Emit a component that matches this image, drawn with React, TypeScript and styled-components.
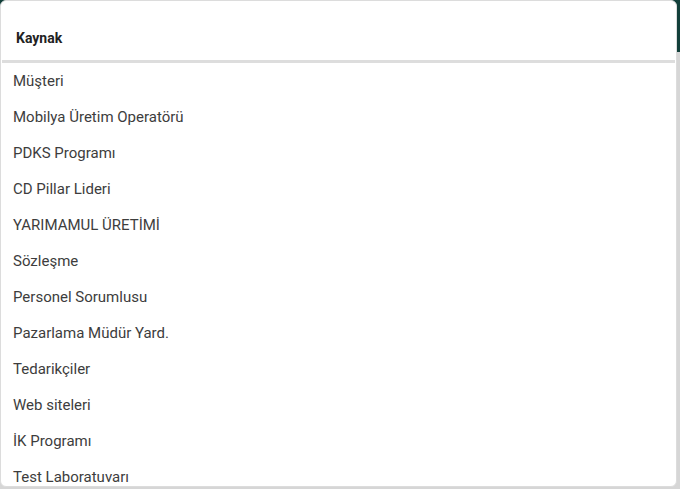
import React from 'react'
import styled, { createGlobalStyle } from 'styled-components'

const GlobalStyle = createGlobalStyle`
  html, body {
    margin: 0;
    padding: 0;
    height: 100%;
    overflow: hidden;
  }
  body {
    font-family: Roboto, "Liberation Sans", Arial, sans-serif;
    background: linear-gradient(to bottom, #123f3a 0, #123f3a 52px, #d6d6d6 52px);
  }
`

const items = [
  'Müşteri',
  'Mobilya Üretim Operatörü',
  'PDKS Programı',
  'CD Pillar Lideri',
  'YARIMAMUL ÜRETİMİ',
  'Sözleşme',
  'Personel Sorumlusu',
  'Pazarlama Müdür Yard.',
  'Tedarikçiler',
  'Web siteleri',
  'İK Programı',
  'Test Laboratuvarı',
]

const Page = styled.div`
  width: 680px;
  height: 489px;
  padding: 0 3px 2px 0;
  box-sizing: border-box;
`

const Card = styled.div`
  height: 100%;
  background: #fff;
  border: 1px solid #dcdcdc;
  border-radius: 6px;
  box-sizing: border-box;
  overflow: hidden;
  display: flex;
  flex-direction: column;
`

const Header = styled.div`
  height: 62px;
  flex-shrink: 0;
  box-sizing: border-box;
  padding: 29px 14px 0 14px;
  margin: 0 1px;
  border-bottom: 3px solid #dddddd;
  font-size: 14px;
  line-height: 16px;
  font-weight: 700;
  color: #222;
`

const List = styled.ul`
  list-style: none;
  margin: 0;
  padding: 0;
`

const Item = styled.li`
  height: 36px;
  display: flex;
  align-items: center;
  padding: 0 12px;
  font-size: 15px;
  color: #3d3d3d;
`

export default function App() {
  return (
    <>
      <GlobalStyle />
      <Page>
        <Card>
          <Header>Kaynak</Header>
          <List>
            {items.map((item) => (
              <Item key={item}>{item}</Item>
            ))}
          </List>
        </Card>
      </Page>
    </>
  )
}
